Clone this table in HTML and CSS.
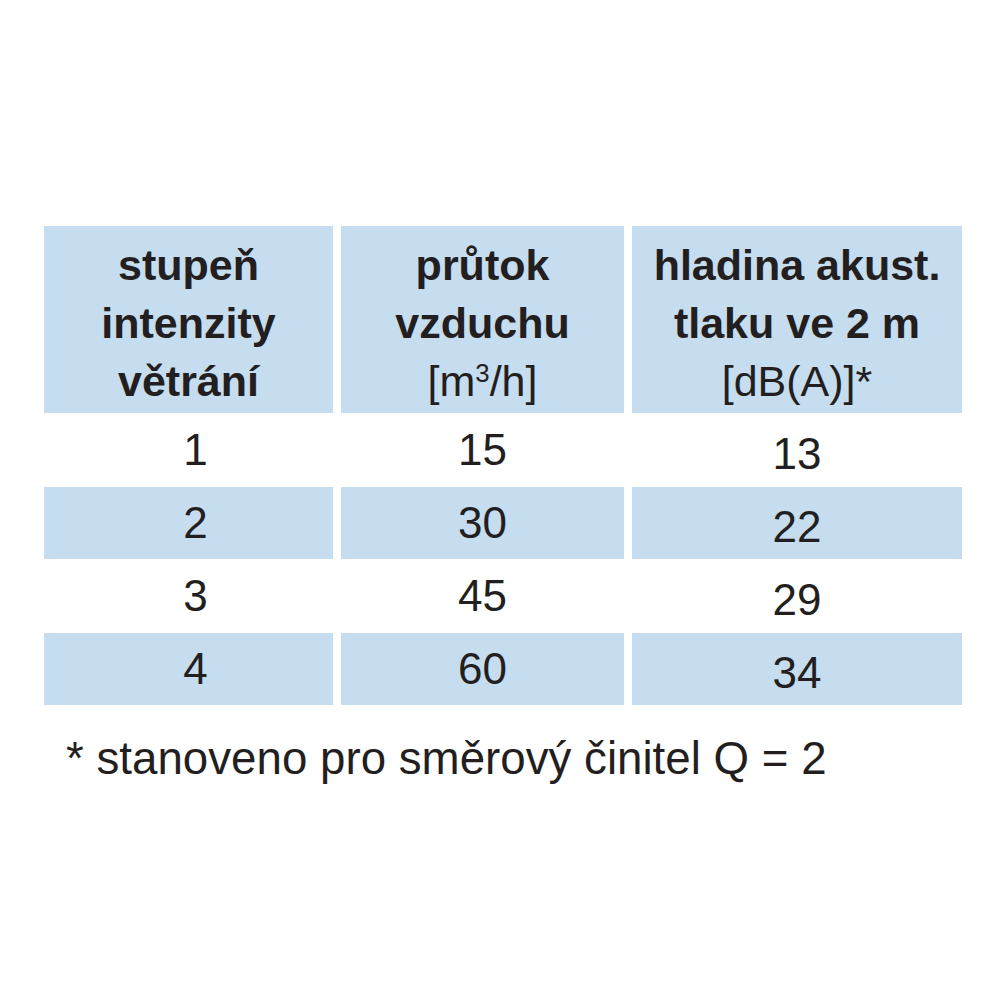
FILE: index.html
```html
<!DOCTYPE html>
<html lang="cs">
<head>
<meta charset="utf-8">
<link rel="stylesheet" href="styles.css">
</head>
<body>
<div class="page">
  <div class="table">
    <div class="cell head"><div><b>stupeň<br>intenzity<br>větrání</b></div></div>
    <div class="cell head"><div><b>průtok<br>vzduchu</b><br>[m<sup>3</sup>/h]</div></div>
    <div class="cell head"><div><b>hladina akust.<br>tlaku ve 2 m</b><br>[dB(A)]*</div></div>

    <div class="cell c1">1</div><div class="cell">15</div><div class="cell c3">13</div>
    <div class="cell blue c1">2</div><div class="cell blue">30</div><div class="cell blue c3">22</div>
    <div class="cell c1">3</div><div class="cell">45</div><div class="cell c3">29</div>
    <div class="cell blue c1">4</div><div class="cell blue">60</div><div class="cell blue c3">34</div>
  </div>
  <p class="note">* stanoveno pro směrový činitel Q = 2</p>
</div>
</body>
</html>
```
FILE: styles.css
```css
html, body {
  margin: 0;
  padding: 0;
  background: #ffffff;
}
body {
  font-family: "Liberation Sans", Arial, sans-serif;
  color: #231f20;
}
.page {
  padding: 226px 0 0 44px;
}
.table {
  display: grid;
  grid-template-columns: 289px 283px 330px;
  grid-template-rows: 187px 74px 72px 74px 72px;
  column-gap: 8px;
  width: 918px;
}
.cell {
  display: flex;
  align-items: center;
  justify-content: center;
  text-align: center;
  font-size: 44px;
  line-height: 56px;
}
.head {
  background: #c6dcef;
  font-size: 43px;
  line-height: 58px;
  padding-top: 6px;
  box-sizing: border-box;
  white-space: nowrap;
}
.head b {
  font-weight: bold;
}
.head sup {
  font-size: 0.6em;
  line-height: 0;
  vertical-align: 0.55em;
}
.blue {
  background: #c6dcef;
}
.c1 {
  padding-left: 14px;
  box-sizing: border-box;
}
.c3 {
  padding-top: 8px;
  box-sizing: border-box;
}
.note {
  margin: 26px 0 0 22px;
  font-size: 45.7px;
  line-height: 56px;
}
```
